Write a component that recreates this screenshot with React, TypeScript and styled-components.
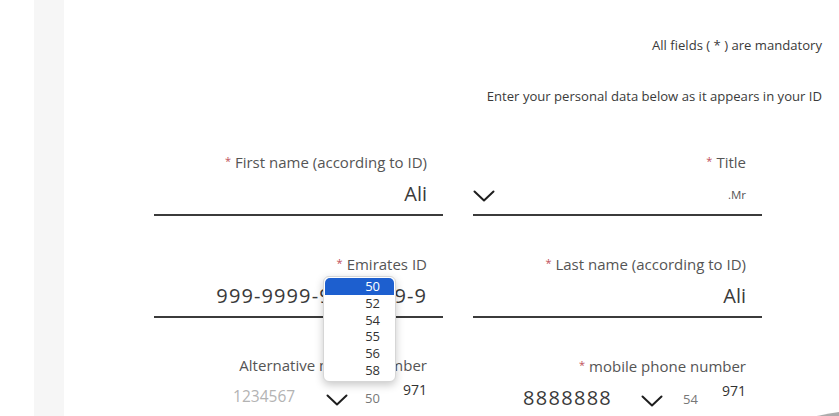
import React from "react";
import styled, { createGlobalStyle } from "styled-components";

const Global = createGlobalStyle`
  html, body {
    margin: 0;
    padding: 0;
    background: #ffffff;
    overflow: hidden;
  }
  body {
    font-family: "Open Sans", "Noto Sans", sans-serif;
    color: #333;
  }
`;

const Page = styled.div`
  display: flex;
  width: 839px;
  height: 416px;
  overflow: hidden;
  position: relative;
`;

const Gutter = styled.div`
  width: 34px;
  flex: none;
  background: #ffffff;
`;

const SideStrip = styled.div`
  width: 30px;
  flex: none;
  background: #f6f6f6;
`;

const Main = styled.main`
  flex: 1;
  display: flex;
  flex-direction: column;
  padding-top: 35px;
`;

const Note = styled.p<{ $gap?: number }>`
  margin: ${(p) => p.$gap ?? 0}px 17px 0 0;
  font-size: 13.1px;
  line-height: 20px;
  color: #3a3a3a;
  text-align: right;
`;

const Form = styled.div`
  position: relative;
  margin: 45px 0 0 90px;
  display: grid;
  grid-template-columns: 289px 289px;
  column-gap: 30px;
  row-gap: 37px;
`;

const Field = styled.div<{ $open?: boolean }>`
  display: flex;
  flex-direction: column;
  border-bottom: 2px solid ${(p) => (p.$open ? "transparent" : "#3b3b3b")};
  padding-right: 16px;
`;

const Label = styled.label`
  font-size: 15px;
  line-height: 20px;
  color: #555;
  text-align: right;
  white-space: nowrap;
`;

const Star = styled.span`
  color: #c0505a;
  font-size: 11px;
  margin-right: 4px;
  vertical-align: 3px;
`;

const ValueRow = styled.div`
  height: 42px;
  display: flex;
  align-items: center;
  justify-content: flex-end;
`;

const Value = styled.span<{ $spacing?: number }>`
  font-size: 20px;
  color: #3a3a3a;
  letter-spacing: ${(p) => p.$spacing ?? 0}px;
  white-space: nowrap;
`;

const SelectRow = styled.div`
  height: 42px;
  display: flex;
  align-items: center;
  justify-content: space-between;
`;

const SmallValue = styled.span`
  font-size: 11.5px;
  color: #555;
  margin-top: 2px;
`;

const PhoneRow = styled.div`
  height: 42px;
  display: flex;
  align-items: center;
  justify-content: flex-end;
`;

const PhoneNumber = styled.span<{ $muted?: boolean; $gap: number }>`
  font-size: ${(p) => (p.$muted ? 15.5 : 20)}px;
  color: ${(p) => (p.$muted ? "#b3b3b3" : "#3a3a3a")};
  letter-spacing: ${(p) => (p.$muted ? 0 : 1.3)}px;
  margin-right: ${(p) => p.$gap}px;
`;

const Code = styled.span<{ $gap: number }>`
  font-size: 13px;
  color: #777;
  margin: 4px ${(p) => p.$gap}px 0 0;
`;

const Prefix = styled.span`
  font-size: 14px;
  color: #333;
  align-self: flex-start;
  margin-top: 5px;
`;

const ChevronBox = styled.span<{ $gap?: number }>`
  display: inline-flex;
  width: 22px;
  height: 12px;
  margin-right: ${(p) => p.$gap ?? 0}px;
  margin-top: ${(p) => (p.$gap ? 8 : 5)}px;
`;

const Chevron: React.FC<{ gap?: number }> = ({ gap }) => (
  <ChevronBox $gap={gap}>
    <svg width="22" height="12" viewBox="0 0 22 12" fill="none">
      <path d="M1.5 1.5 L11 10.5 L20.5 1.5" stroke="#1e1e1e" strokeWidth="2" strokeLinecap="round" strokeLinejoin="round" />
    </svg>
  </ChevronBox>
);

const ListBox = styled.ul`
  position: absolute;
  left: 169px;
  top: 125px;
  width: 71px;
  margin: 0;
  padding: 1px 0 2px;
  list-style: none;
  background: #fff;
  border: 1px solid #d6d6d6;
  border-radius: 6px;
  box-shadow: 0 3px 8px rgba(0, 0, 0, 0.22);
  z-index: 5;
  overflow: hidden;
`;

const Option = styled.li<{ $selected?: boolean }>`
  height: 16.8px;
  line-height: 16px;
  font-size: 13px;
  text-align: right;
  padding-right: 14px;
  margin: 0 1px;
  border-radius: ${(p) => (p.$selected ? "5px 5px 0 0" : "0")};
  color: ${(p) => (p.$selected ? "#ffffff" : "#333")};
  background: ${(p) => (p.$selected ? "#1d5fcf" : "transparent")};
`;

const FloatingButton = styled.div`
  position: absolute;
  left: 629px;
  top: 410px;
  width: 482px;
  height: 482px;
  border-radius: 50%;
  background: #acacac;
`;

const codes = ["50", "52", "54", "55", "56", "58"];

export default function App() {
  return (
    <>
      <Global />
      <Page>
        <Gutter />
        <SideStrip />
        <Main>
          <Note>All fields ( * ) are mandatory</Note>
          <Note $gap={31}>Enter your personal data below as it appears in your ID</Note>
          <Form>
            <Field>
              <Label>
                <Star>*</Star>First name (according to ID)
              </Label>
              <ValueRow>
                <Value>Ali</Value>
              </ValueRow>
            </Field>
            <Field>
              <Label>
                <Star>*</Star>Title
              </Label>
              <SelectRow>
                <Chevron />
                <SmallValue>.Mr</SmallValue>
              </SelectRow>
            </Field>

            <Field>
              <Label>
                <Star>*</Star>Emirates ID
              </Label>
              <ValueRow>
                <Value $spacing={1.1}>999-9999-9999999-9</Value>
              </ValueRow>
            </Field>
            <Field>
              <Label>
                <Star>*</Star>Last name (according to ID)
              </Label>
              <ValueRow>
                <Value>Ali</Value>
              </ValueRow>
            </Field>

            <Field $open>
              <Label>Alternative mobile number</Label>
              <PhoneRow>
                <PhoneNumber $muted $gap={31}>1234567</PhoneNumber>
                <Chevron gap={17} />
                <Code $gap={23}>50</Code>
                <Prefix>971</Prefix>
              </PhoneRow>
            </Field>
            <Field $open>
              <Label>
                <Star>*</Star>mobile phone number
              </Label>
              <PhoneRow>
                <PhoneNumber $gap={29}>8888888</PhoneNumber>
                <Chevron gap={20} />
                <Code $gap={24}>54</Code>
                <Prefix>971</Prefix>
              </PhoneRow>
            </Field>

            <ListBox role="listbox">
              {codes.map((c, i) => (
                <Option key={c} $selected={i === 0}>
                  {c}
                </Option>
              ))}
            </ListBox>
          </Form>
        </Main>
        <FloatingButton />
      </Page>
    </>
  );
}
